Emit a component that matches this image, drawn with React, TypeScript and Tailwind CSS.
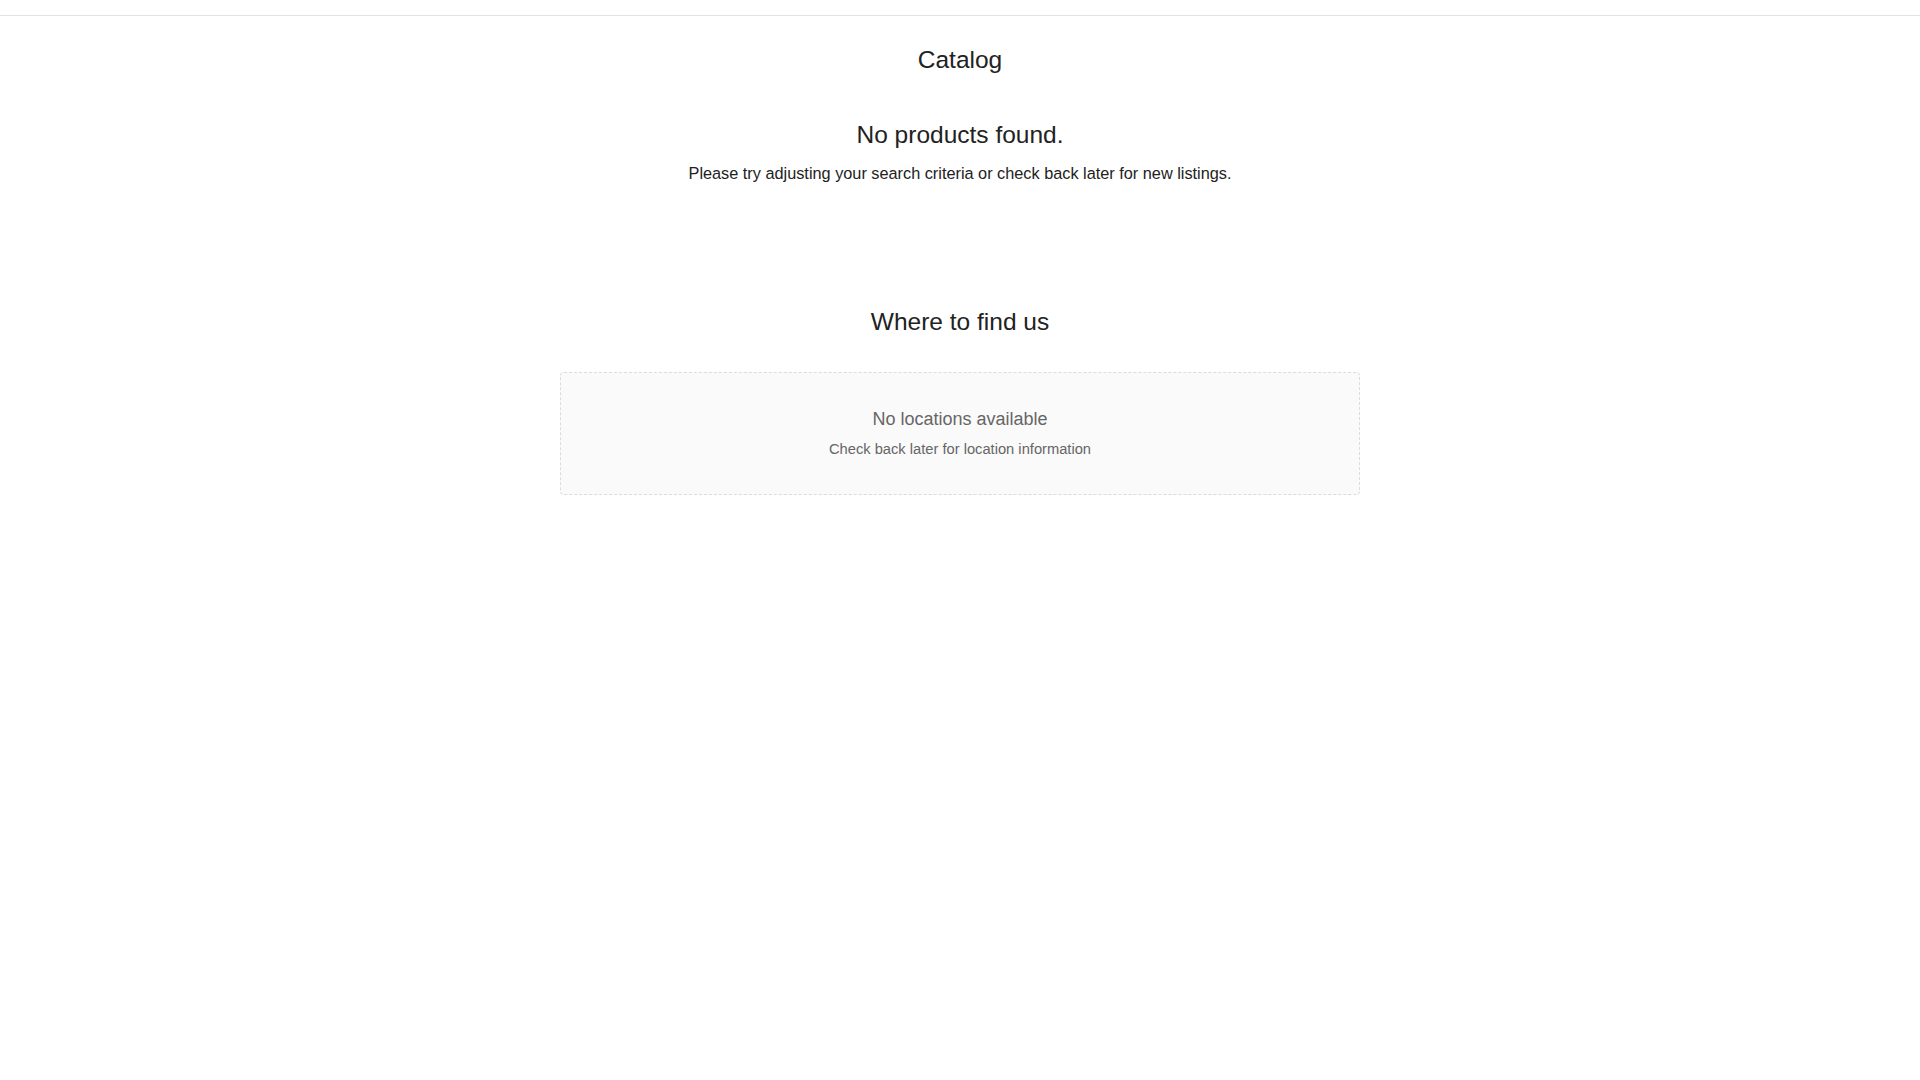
export default function App() {
  return (
    <div className="min-h-screen bg-white text-[#222] font-['Liberation_Sans',Arial,sans-serif]">
      <header className="h-4 border-b border-[#e3e3e3]" />
      <main className="mx-auto max-w-[800px] text-center">
        <h1 className="mt-[30px] text-[24.5px] leading-[28px] font-normal">Catalog</h1>
        <section className="mt-[47px]">
          <h2 className="text-[24.5px] leading-[28px] font-normal">No products found.</h2>
          <p className="mt-[12px] text-[16.3px] leading-[24px] text-[#222]">
            Please try adjusting your search criteria or check back later for new listings.
          </p>
        </section>
        <section className="mt-[123px]">
          <h2 className="text-[24.5px] leading-[28px] font-normal">Where to find us</h2>
          <div className="mt-[36px] rounded-[4px] border border-dashed border-[#dcdcdc] bg-[#fafafa] pt-[33px] pb-[35px]">
            <p className="text-[18px] leading-[26px] text-[#666]">No locations available</p>
            <p className="mt-[7px] text-[14.7px] leading-[20px] text-[#666]">Check back later for location information</p>
          </div>
        </section>
      </main>
    </div>
  );
}
